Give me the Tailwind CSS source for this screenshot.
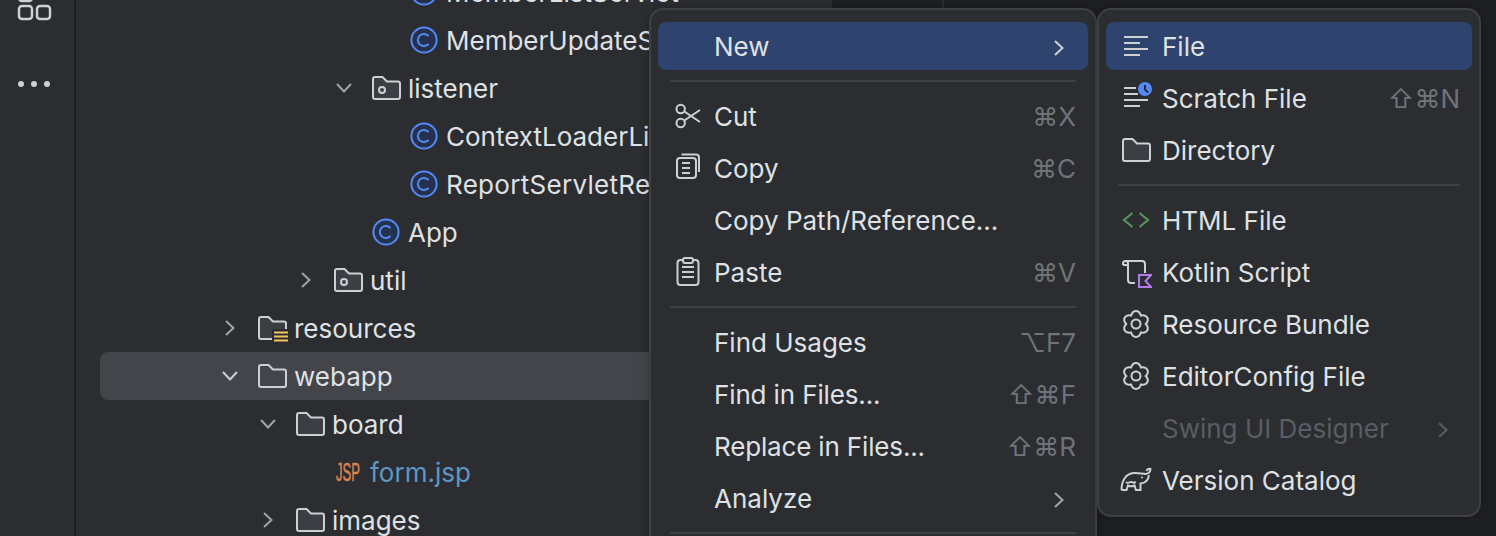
<!DOCTYPE html>
<html lang="en">
<head>
<meta charset="UTF-8">
<title>Project tree context menu</title>
<script src="https://cdn.jsdelivr.net/npm/@tailwindcss/browser@4"></script>
</head>
<body class="bg-[#1e1f22] font-[family-name:Inter,'DejaVu_Sans',sans-serif] text-[26px] text-[#dfe1e5]">
<div class="relative flex h-[536px] w-[1496px] overflow-hidden">

  <!-- tool strip -->
  <div class="w-[76px] h-full shrink-0 bg-[#2b2d30] border-r-2 border-[#1e1f22]">
    <svg width="74" height="100" viewBox="0 0 74 100" fill="none" stroke="#ced0d6" stroke-width="2.5">
      <rect x="19" y="-14" width="13" height="15" rx="3"/>
      <rect x="19" y="6" width="13" height="13" rx="3"/>
      <rect x="37" y="6" width="13" height="13" rx="3"/>
      <circle cx="21" cy="84" r="3" fill="#ced0d6" stroke="none"/>
      <circle cx="34" cy="84" r="3" fill="#ced0d6" stroke="none"/>
      <circle cx="47" cy="84" r="3" fill="#ced0d6" stroke="none"/>
    </svg>
  </div>

  <!-- project tree -->
  <div class="w-[756px] h-full shrink-0 bg-[#2b2d30] overflow-hidden pl-6 whitespace-nowrap">
    <div class="-mt-8">
    <div class="flex items-center h-12 pl-[274px]">
      <span class="w-4 mr-[18px]"></span>
      <svg class="w-8 h-8 mr-1.5 shrink-0" viewBox="0 0 32 32"><circle cx="16" cy="16" r="12.6" fill="#25324d" stroke="#548af7" stroke-width="2"/><path d="M20.5 12.2a6 6 0 1 0 0 7.6" fill="none" stroke="#548af7" stroke-width="2"/></svg>
      <span>MemberListServlet</span>
    </div>
    <div class="flex items-center h-12 pl-[274px]">
      <span class="w-4 mr-[18px]"></span>
      <svg class="w-8 h-8 mr-1.5 shrink-0" viewBox="0 0 32 32"><circle cx="16" cy="16" r="12.6" fill="#25324d" stroke="#548af7" stroke-width="2"/><path d="M20.5 12.2a6 6 0 1 0 0 7.6" fill="none" stroke="#548af7" stroke-width="2"/></svg>
      <span>MemberUpdateServlet</span>
    </div>
    <div class="flex items-center h-12 pl-[236px]">
      <svg class="w-4 h-4 mr-[18px] shrink-0" viewBox="0 0 16 16" fill="none" stroke="#a0a3ab" stroke-width="2"><path d="M1 4l7 7.5L15 4"/></svg>
      <svg class="w-8 h-8 mr-1.5 shrink-0" viewBox="0 0 32 32"><path d="M5 5h7.5l4.5 4.5h11a2 2 0 0 1 2 2V25a2 2 0 0 1-2 2H5a2 2 0 0 1-2-2V7a2 2 0 0 1 2-2z" fill="#3c3e43" stroke="#ced0d6" stroke-width="2"/><circle cx="12" cy="18" r="3" fill="none" stroke="#ced0d6" stroke-width="2"/></svg>
      <span>listener</span>
    </div>
    <div class="flex items-center h-12 pl-[274px]">
      <span class="w-4 mr-[18px]"></span>
      <svg class="w-8 h-8 mr-1.5 shrink-0" viewBox="0 0 32 32"><circle cx="16" cy="16" r="12.6" fill="#25324d" stroke="#548af7" stroke-width="2"/><path d="M20.5 12.2a6 6 0 1 0 0 7.6" fill="none" stroke="#548af7" stroke-width="2"/></svg>
      <span>ContextLoaderListener</span>
    </div>
    <div class="flex items-center h-12 pl-[274px]">
      <span class="w-4 mr-[18px]"></span>
      <svg class="w-8 h-8 mr-1.5 shrink-0" viewBox="0 0 32 32"><circle cx="16" cy="16" r="12.6" fill="#25324d" stroke="#548af7" stroke-width="2"/><path d="M20.5 12.2a6 6 0 1 0 0 7.6" fill="none" stroke="#548af7" stroke-width="2"/></svg>
      <span class="tracking-[0.3px]">ReportServletRequest</span>
    </div>
    <div class="flex items-center h-12 pl-[236px]">
      <span class="w-4 mr-[18px]"></span>
      <svg class="w-8 h-8 mr-1.5 shrink-0" viewBox="0 0 32 32"><circle cx="16" cy="16" r="12.6" fill="#25324d" stroke="#548af7" stroke-width="2"/><path d="M20.5 12.2a6 6 0 1 0 0 7.6" fill="none" stroke="#548af7" stroke-width="2"/></svg>
      <span>App</span>
    </div>
    <div class="flex items-center h-12 pl-[198px]">
      <svg class="w-4 h-4 mr-[18px] shrink-0" viewBox="0 0 16 16" fill="none" stroke="#a0a3ab" stroke-width="2"><path d="M4 1l7.5 7L4 15"/></svg>
      <svg class="w-8 h-8 mr-1.5 shrink-0" viewBox="0 0 32 32"><path d="M5 5h7.5l4.5 4.5h11a2 2 0 0 1 2 2V25a2 2 0 0 1-2 2H5a2 2 0 0 1-2-2V7a2 2 0 0 1 2-2z" fill="#3c3e43" stroke="#ced0d6" stroke-width="2"/><circle cx="12" cy="18" r="3" fill="none" stroke="#ced0d6" stroke-width="2"/></svg>
      <span>util</span>
    </div>
    <div class="flex items-center h-12 pl-[122px]">
      <svg class="w-4 h-4 mr-[18px] shrink-0" viewBox="0 0 16 16" fill="none" stroke="#a0a3ab" stroke-width="2"><path d="M4 1l7.5 7L4 15"/></svg>
      <svg class="w-8 h-8 mr-1.5 shrink-0" viewBox="0 0 32 32"><path d="M5 5h7.5l4.5 4.5h11a2 2 0 0 1 2 2V25a2 2 0 0 1-2 2H5a2 2 0 0 1-2-2V7a2 2 0 0 1 2-2z" fill="#3c3e43" stroke="#ced0d6" stroke-width="2"/><rect x="16" y="17" width="17" height="16" rx="2" fill="#2b2d30"/><path d="M18 20.5h14M18 24.5h14M18 28.5h14" stroke="#f2c55c" stroke-width="2"/></svg>
      <span>resources</span>
    </div>
    <div class="flex items-center h-12 pl-[122px] bg-[#43454a] rounded-lg">
      <svg class="w-4 h-4 mr-[18px] shrink-0" viewBox="0 0 16 16" fill="none" stroke="#ced0d6" stroke-width="2"><path d="M1 4l7 7.5L15 4"/></svg>
      <svg class="w-8 h-8 mr-1.5 shrink-0" viewBox="0 0 32 32"><path d="M5 5h7.5l4.5 4.5h11a2 2 0 0 1 2 2V25a2 2 0 0 1-2 2H5a2 2 0 0 1-2-2V7a2 2 0 0 1 2-2z" fill="#43454a" stroke="#ced0d6" stroke-width="2"/></svg>
      <span>webapp</span>
    </div>
    <div class="flex items-center h-12 pl-[160px]">
      <svg class="w-4 h-4 mr-[18px] shrink-0" viewBox="0 0 16 16" fill="none" stroke="#a0a3ab" stroke-width="2"><path d="M1 4l7 7.5L15 4"/></svg>
      <svg class="w-8 h-8 mr-1.5 shrink-0" viewBox="0 0 32 32"><path d="M5 5h7.5l4.5 4.5h11a2 2 0 0 1 2 2V25a2 2 0 0 1-2 2H5a2 2 0 0 1-2-2V7a2 2 0 0 1 2-2z" fill="#3c3e43" stroke="#ced0d6" stroke-width="2"/></svg>
      <span>board</span>
    </div>
    <div class="flex items-center h-12 pl-[198px]">
      <span class="w-4 mr-[18px]"></span>
      <span class="w-8 mr-1.5 shrink-0 pl-2 font-[family-name:'Liberation_Sans',sans-serif] text-[26px] leading-none text-[#d9834f] [-webkit-text-stroke:0.6px_#d9834f] scale-x-[0.5] origin-left">JSP</span>
      <span class="text-[#5f97c5]">form.jsp</span>
    </div>
    <div class="flex items-center h-12 pl-[160px]">
      <svg class="w-4 h-4 mr-[18px] shrink-0" viewBox="0 0 16 16" fill="none" stroke="#a0a3ab" stroke-width="2"><path d="M4 1l7.5 7L4 15"/></svg>
      <svg class="w-8 h-8 mr-1.5 shrink-0" viewBox="0 0 32 32"><path d="M5 5h7.5l4.5 4.5h11a2 2 0 0 1 2 2V25a2 2 0 0 1-2 2H5a2 2 0 0 1-2-2V7a2 2 0 0 1 2-2z" fill="#3c3e43" stroke="#ced0d6" stroke-width="2"/></svg>
      <span>images</span>
    </div>
    </div>
  </div>

  <!-- editor gutter -->
  <div class="w-[110px] shrink-0 border-r-2 border-[#2b2d30] h-full box-content"></div>

  <!-- context menu -->
  <div class="absolute left-[649px] top-2 w-[448px] h-[560px] bg-[#2b2d30] border-2 border-[#3e4045] rounded-[14px] px-[7px] pt-3 shadow-[0_0_10px_rgba(0,0,0,0.25)]">
    <div class="flex items-center h-12 pl-14 pr-3 bg-[#2e436e] rounded-lg">
      <span class="flex-1">New</span>
      <svg class="w-4 h-4 mr-[9px] mt-1" viewBox="0 0 16 16" fill="none" stroke="#ced0d6" stroke-width="2"><path d="M4 1l7.5 7L4 15"/></svg>
    </div>
    <div class="flex items-center h-[22px] px-3"><div class="h-0.5 w-full bg-[#3f4146]"></div></div>
    <div class="flex flex-col gap-1">
      <div class="flex items-center h-12 pl-3.5 pr-3">
        <svg class="w-8 h-8 mr-2.5 shrink-0" viewBox="0 0 32 32" fill="none" stroke="#ced0d6" stroke-width="2"><circle cx="8.7" cy="9" r="4.2"/><circle cx="8.7" cy="23" r="4.2"/><path d="M12.3 11.5L28 22M12.3 20.5L28 10"/></svg>
        <span class="flex-1">Cut</span>
        <span class="text-[#6f737a]">⌘X</span>
      </div>
      <div class="flex items-center h-12 pl-3.5 pr-3">
        <svg class="w-8 h-8 mr-2.5 shrink-0" viewBox="0 0 32 32" fill="none" stroke="#ced0d6" stroke-width="2"><rect x="5" y="6" width="19" height="20" rx="3"/><path d="M9.5 2.5H24a3 3 0 0 1 3 3V20M10 11h8M10 16h8M10 21h8"/></svg>
        <span class="flex-1">Copy</span>
        <span class="text-[#6f737a]">⌘C</span>
      </div>
      <div class="flex items-center h-12 pl-14 pr-3"><span class="flex-1">Copy Path/Reference...</span></div>
      <div class="flex items-center h-12 pl-3.5 pr-3">
        <svg class="w-8 h-8 mr-2.5 shrink-0" viewBox="0 0 32 32" fill="none" stroke="#ced0d6" stroke-width="2"><rect x="5.5" y="4" width="21" height="25" rx="3"/><rect x="11" y="2" width="10" height="5" rx="2" fill="#2b2d30"/><path d="M10 11h12M10 16h12M10 21h12"/></svg>
        <span class="flex-1">Paste</span>
        <span class="text-[#6f737a]">⌘V</span>
      </div>
    </div>
    <div class="flex items-center h-[22px] px-3"><div class="h-0.5 w-full bg-[#3f4146]"></div></div>
    <div class="flex flex-col gap-1">
      <div class="flex items-center h-12 pl-14 pr-3"><span class="flex-1">Find Usages</span><span class="text-[#6f737a]">⌥F7</span></div>
      <div class="flex items-center h-12 pl-14 pr-3"><span class="flex-1 tracking-[-0.13px]">Find in Files...</span><span class="text-[#6f737a]">⇧⌘F</span></div>
      <div class="flex items-center h-12 pl-14 pr-3"><span class="flex-1 tracking-[-0.16px]">Replace in Files...</span><span class="text-[#6f737a]">⇧⌘R</span></div>
      <div class="flex items-center h-12 pl-14 pr-3">
        <span class="flex-1">Analyze</span>
        <svg class="w-4 h-4 mr-[9px] mt-1" viewBox="0 0 16 16" fill="none" stroke="#a0a3ab" stroke-width="2"><path d="M4 1l7.5 7L4 15"/></svg>
      </div>
    </div>
    <div class="flex items-center h-[22px] px-3"><div class="h-0.5 w-full bg-[#3f4146]"></div></div>
  </div>

  <!-- New submenu -->
  <div class="absolute left-[1097px] top-2 w-[384px] h-[509px] bg-[#2b2d30] border-2 border-[#3e4045] rounded-[14px] px-[7px] pt-3 shadow-[0_0_10px_rgba(0,0,0,0.25)]">
    <div class="flex flex-col gap-1">
      <div class="flex items-center h-12 pl-3.5 pr-3 bg-[#2e436e] rounded-lg">
        <svg class="w-8 h-8 mr-2.5 shrink-0" viewBox="0 0 32 32" fill="none" stroke="#ced0d6" stroke-width="2"><path d="M4 7h24M4 13h16M4 19h24M4 25h16"/></svg>
        <span>File</span>
      </div>
      <div class="flex items-center h-12 pl-3.5 pr-3">
        <svg class="w-8 h-8 mr-2.5 shrink-0" viewBox="0 0 32 32" fill="none" stroke="#ced0d6" stroke-width="2"><path d="M4 6h12M4 12h14M4 18h24M4 24h16"/><circle cx="25" cy="7" r="7" fill="#548af7" stroke="none"/><path d="M25 3v4.5l3 3" stroke="#2b2d30"/></svg>
        <span class="flex-1">Scratch File</span>
        <span class="text-[#6f737a]">⇧⌘N</span>
      </div>
      <div class="flex items-center h-12 pl-3.5 pr-3">
        <svg class="w-8 h-8 mr-2.5 shrink-0" viewBox="0 0 32 32"><path d="M5 5h7.5l4.5 4.5h11a2 2 0 0 1 2 2V25a2 2 0 0 1-2 2H5a2 2 0 0 1-2-2V7a2 2 0 0 1 2-2z" fill="#3c3e43" stroke="#ced0d6" stroke-width="2"/></svg>
        <span>Directory</span>
      </div>
    </div>
    <div class="flex items-center h-[22px] px-3"><div class="h-0.5 w-full bg-[#3f4146]"></div></div>
    <div class="flex flex-col gap-1">
      <div class="flex items-center h-12 pl-3.5 pr-3">
        <svg class="w-8 h-8 mr-2.5 shrink-0" viewBox="0 0 32 32" fill="none" stroke="#57965c" stroke-width="2.2"><path d="M12.5 9L4 16l8.5 7M19.5 9L28 16l-8.5 7"/></svg>
        <span>HTML File</span>
      </div>
      <div class="flex items-center h-12 pl-3.5 pr-3">
        <svg class="w-8 h-8 mr-2.5 shrink-0" viewBox="0 0 32 32" fill="none" stroke="#ced0d6" stroke-width="2"><path d="M3 9V7.5a2.5 2.5 0 0 1 5 0V24a3 3 0 0 0 3 3h4M3 9h5M5.5 5H22a3 3 0 0 1 3 3v9"/><path d="M19 19h12l-5.5 6 5.5 6H19z" fill="#2b2d30" stroke="#b07ce8"/></svg>
        <span>Kotlin Script</span>
      </div>
      <div class="flex items-center h-12 pl-3.5 pr-3">
        <svg class="w-8 h-8 mr-2.5 shrink-0" viewBox="0 0 32 32" fill="none" stroke="#ced0d6" stroke-width="2"><path d="M11.1 7.5C13 1.5 19 1.5 20.9 7.5C27.05 6.15 30.05 11.35 25.8 16C30.05 20.65 27.05 25.85 20.9 24.5C19 30.5 13 30.5 11.1 24.5C4.95 25.85 1.95 20.65 6.2 16C1.95 11.35 4.95 6.15 11.1 7.5z"/><circle cx="16" cy="16" r="4.5"/></svg>
        <span>Resource Bundle</span>
      </div>
      <div class="flex items-center h-12 pl-3.5 pr-3">
        <svg class="w-8 h-8 mr-2.5 shrink-0" viewBox="0 0 32 32" fill="none" stroke="#ced0d6" stroke-width="2"><path d="M11.1 7.5C13 1.5 19 1.5 20.9 7.5C27.05 6.15 30.05 11.35 25.8 16C30.05 20.65 27.05 25.85 20.9 24.5C19 30.5 13 30.5 11.1 24.5C4.95 25.85 1.95 20.65 6.2 16C1.95 11.35 4.95 6.15 11.1 7.5z"/><circle cx="16" cy="16" r="4.5"/></svg>
        <span>EditorConfig File</span>
      </div>
      <div class="flex items-center h-12 pl-14 pr-3 text-[#5a5d63]">
        <span class="flex-1">Swing UI Designer</span>
        <svg class="w-4 h-4 mr-[9px] mt-1" viewBox="0 0 16 16" fill="none" stroke="#5a5d63" stroke-width="2"><path d="M4 1l7.5 7L4 15"/></svg>
      </div>
      <div class="flex items-center h-12 pl-3.5 pr-3">
        <svg class="w-8 h-8 mr-2.5 shrink-0" viewBox="0 0 32 32" fill="none" stroke="#ced0d6" stroke-width="2"><path d="M1.5 26C1.5 18 5 9.5 14 9C18 8.8 21 9.5 24 9.8C27.5 10.5 30.5 8.5 30.5 5C28.5 4.5 27 5.5 26.5 7M29 11C28.5 15 26 19 20.5 19.5V26H16L14.5 21.5C12.5 22.5 10 22.5 8 21.5L6.5 26H1.5M6 18C8 20.5 10.5 16.5 13 18.5C14 19 15 18.5 15.5 17.5"/><circle cx="22" cy="13.5" r="1" fill="#ced0d6" stroke="none"/></svg>
        <span>Version Catalog</span>
      </div>
    </div>
  </div>
</div>
</body>
</html>
